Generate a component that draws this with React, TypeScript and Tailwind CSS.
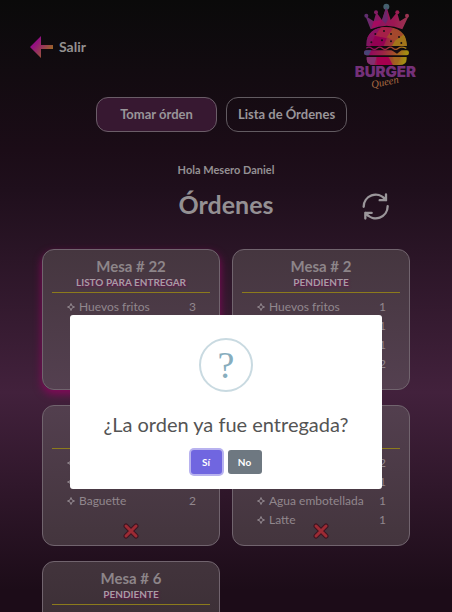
type Item = { name: string; count: number };
type Order = { table: number; status: string; items: Item[]; ready?: boolean };

const orders: Order[] = [
  { table: 22, status: "LISTO PARA ENTREGAR", ready: true, items: [{ name: "Huevos fritos", count: 3 }] },
  {
    table: 2,
    status: "PENDIENTE",
    items: [
      { name: "Huevos fritos", count: 1 },
      { name: "Baguette", count: 1 },
      { name: "Latte", count: 1 },
      { name: "Jugo", count: 2 },
    ],
  },
  {
    table: 4,
    status: "PENDIENTE",
    items: [
      { name: "Latte", count: 1 },
      { name: "Café", count: 1 },
      { name: "Baguette", count: 2 },
    ],
  },
  {
    table: 5,
    status: "PENDIENTE",
    items: [
      { name: "Baguette", count: 2 },
      { name: "Jugo", count: 1 },
      { name: "Agua embotellada", count: 1 },
      { name: "Latte", count: 1 },
    ],
  },
  { table: 6, status: "PENDIENTE", items: [] },
];

function Logo() {
  return (
    <svg viewBox="42 0 192 270" className="h-[90px] w-16" role="img" aria-label="Burger Queen">
      <defs>
        <linearGradient id="poly" x1="75" y1="90" x2="208" y2="125" gradientUnits="userSpaceOnUse">
          <stop offset="0" stopColor="#6b2468" />
          <stop offset="0.25" stopColor="#930b5c" />
          <stop offset="0.5" stopColor="#9c2347" />
          <stop offset="0.75" stopColor="#a25028" />
          <stop offset="1" stopColor="#a38d12" />
        </linearGradient>
        <linearGradient id="crown" x1="75" y1="60" x2="208" y2="70" gradientUnits="userSpaceOnUse">
          <stop offset="0" stopColor="#5c3170" />
          <stop offset="0.3" stopColor="#8d1560" />
          <stop offset="0.65" stopColor="#9c1752" />
          <stop offset="1" stopColor="#9a3a50" />
        </linearGradient>
        <clipPath id="burger">
          <path d="M79 138C77 101 103 81 139 81s63 20 61 57z" />
          <path d="M80 171h120v6q0 18-22 18h-76q-22 0-22-18z" />
        </clipPath>
      </defs>
      <g fill="url(#crown)">
        <path d="M76 47L101 64 109 37 126 60 139 19 152 60 171 37 179 64 206 47 187 88Q140 66 92 88z" />
        <circle cx="79" cy="47" r="6" />
        <circle cx="108" cy="37" r="6" />
        <circle cx="172" cy="37" r="6" />
        <circle cx="201" cy="47" r="6" />
      </g>
      <circle cx="139" cy="20" r="9" fill="#45606e" />
      <path d="M139 22l-13 38 11 12 7-14z" fill="#6a286b" />
      <path d="M94 86l7-22 25-4-8 14z" fill="#a40b60" />
      <g clipPath="url(#burger)">
        <rect x="75" y="78" width="130" height="120" fill="url(#poly)" />
        <path d="M75 78h50l-20 30-30 10z" fill="#8b1261" />
        <path d="M125 78l35 12-20 25-35-7z" fill="#a62048" />
        <path d="M160 84l30 20-25 18-25-10z" fill="#a4482d" />
        <path d="M105 108l35 7-10 25H90z" fill="#930052" />
        <path d="M165 122l28-20 12 38h-50z" fill="#a3751b" />
        <path d="M80 170h30l-8 28H75z" fill="#83316f" />
        <path d="M110 170h35l15 28h-50z" fill="#a5004e" />
        <path d="M158 170h25l-15 28z" fill="#a06520" />
      </g>
      <g fill="#1a0f16">
        <circle cx="132" cy="93" r="3" /><circle cx="153" cy="102" r="3" /><circle cx="177" cy="111" r="3" />
        <circle cx="106" cy="102" r="3" /><circle cx="126" cy="121" r="3" /><circle cx="153" cy="124" r="3" />
        <circle cx="94" cy="127" r="3" /><circle cx="184" cy="129" r="3" />
      </g>
      <path d="M79 145q8-7 16 0t16 0 16 0 16 0 16 0 16 0 24 0" fill="none" stroke="url(#poly)" strokeWidth="4" />
      <rect x="72" y="151" width="135" height="15" rx="7" fill="url(#poly)" />
      <path d="M72 159q0-8 8-8h14l-8 15q-14 0-14-7z" fill="#474577" />
      <path d="M154 150h31l-14 11z" fill="#160c13" />
      <text x="44" y="230" fill="#743078" className="font-['Inter'] text-[45px] font-black">BURGER</text>
      <text x="96" y="265" transform="rotate(-12 96 265)" fill="#a86a43" className="font-['Liberation_Serif'] text-[32px] italic">Queen</text>
    </svg>
  );
}

function Cross() {
  return (
    <svg viewBox="0 0 16 16" className="size-4" aria-hidden="true">
      <path d="M3 3l10 10M13 3L3 13" stroke="#3c1420" strokeWidth="5" strokeLinecap="round" />
      <path d="M3 3l10 10M13 3L3 13" stroke="#9c2b34" strokeWidth="3" strokeLinecap="round" />
    </svg>
  );
}

function Sparkle() {
  return (
    <svg viewBox="0 0 16 16" className="size-2" fill="none" stroke="currentColor" strokeWidth="2" aria-hidden="true">
      <path d="M8 1L10 6 15 8 10 10 8 15 6 10 1 8 6 6z" />
    </svg>
  );
}

function OrderCard({ order }: { order: Order }) {
  const glow = order.ready ? "shadow-[0_4px_8px_0px_#85085a]" : "";
  return (
    <article className={`relative flex min-h-[141px] flex-col rounded-xl border border-[#71646e] bg-[linear-gradient(#40333a_0px,#45363f_250px,#544050_392px,#45363f_530px,#3d3037_612px)] bg-fixed px-[9px] pt-2 ${glow}`}>
      <h2 className="text-center text-[15px] leading-4 font-bold text-[#8d8589]">Mesa # {order.table}</h2>
      <p className="pt-0.5 text-center text-[10px] leading-3 font-bold text-[#a69ca3] [text-shadow:1px_1px_2px_#6c1250]">{order.status}</p>
      <hr className="mt-1 border-[#8c7b1c]" />
      <ul className="pt-1 pr-3.5 pl-[15px] text-xs leading-[19px] text-[#91878d]">
        {order.items.map((item) => (
          <li key={item.name} className="flex justify-between">
            <span className="flex items-center gap-1">
              <Sparkle />
              {item.name}
            </span>
            <span>{item.count}</span>
          </li>
        ))}
      </ul>
      {!order.ready && order.table !== 2 && (
        <button type="button" aria-label="Cancelar orden" className="absolute bottom-1.5 left-1/2 -translate-x-1/2">
          <Cross />
        </button>
      )}
    </article>
  );
}

export default function App() {
  return (
    <div className="relative h-screen overflow-hidden bg-[linear-gradient(#0a0a0a_0px,#1b0c17_150px,#1f0f1c_190px,#42213c_392px,#1c0c18_590px)] font-['Lato',sans-serif]">
      <header className="flex items-start justify-between pr-[34px] pl-[29px]">
        <button type="button" className="mt-[35px] flex items-center gap-[6px] text-sm leading-6 font-bold text-[#949191]">
          <svg viewBox="0 0 24 24" className="size-6" aria-hidden="true">
            <defs>
              <linearGradient id="back" x1="3" y1="5" x2="21" y2="19" gradientUnits="userSpaceOnUse">
                <stop offset="0.2" stopColor="#930f83" />
                <stop offset="1" stopColor="#9c6c20" />
              </linearGradient>
            </defs>
            <path d="M1 12L12 1v9h12v4H12v9z" fill="url(#back)" />
          </svg>
          Salir
        </button>
        <Logo />
      </header>

      <nav className="flex justify-center pt-[7px] text-[13px] font-bold text-[#999599]">
        <button type="button" className="mr-[9px] h-[35px] w-[121px] rounded-xl border border-[#6b5d68] bg-[#371831]">Tomar órden</button>
        <button type="button" className="mr-[9px] h-[35px] w-[121px] rounded-xl border border-[#625b61]">Lista de Órdenes</button>
      </nav>

      <main>
        <p className="pt-[30px] text-center text-[11px] leading-4 font-bold text-[#949093]">Hola Mesero Daniel</p>
        <div className="grid grid-cols-[1fr_auto_1fr] items-center pt-2">
          <h1 className="col-start-2 text-[25px] leading-9 font-bold text-[#949093]">Órdenes</h1>
          <button type="button" aria-label="Actualizar" className="mr-[63px] justify-self-end pt-1">
            <svg viewBox="409 131 81 80" className="size-[27px]" fill="none" stroke="#9a969a" strokeWidth="7" strokeLinecap="round" strokeLinejoin="round" aria-hidden="true">
              <path d="M414 172A36 36 0 0 1 478 149M481 135v17h-19M472 143l9 9" />
              <path d="M486 170A36 36 0 0 1 422 193M419 207v-17h19M428 199l-9-9" />
            </svg>
          </button>
        </div>
        <section className="grid grid-cols-2 gap-x-3 gap-y-[15px] px-[42px] pt-[27px]">
          {orders.map((order) => (
            <OrderCard key={order.table} order={order} />
          ))}
        </section>
      </main>

      <div className="absolute inset-0 flex items-start justify-center px-[70px] pt-[315px]">
        <div role="dialog" aria-modal="true" aria-labelledby="question" className="flex w-full flex-col items-center rounded-[3px] bg-white pt-[23px] pb-[15px]">
          <div className="flex size-[54px] items-center justify-center rounded-full border-2 border-[#c9dae1] font-['Liberation_Serif',serif] text-[38px] leading-none text-[#87adbd]">?</div>
          <h2 id="question" className="pt-5 text-xl leading-6 text-[#545454]">¿La orden ya fue entregada?</h2>
          <div className="flex gap-[6px] pt-[14px] text-[10px] font-bold text-white">
            <button type="button" className="h-6 w-[31px] rounded-[3px] bg-[#7066e0] ring-2 ring-[#b8b2ef]">Sí</button>
            <button type="button" className="h-6 w-[34px] rounded-[3px] bg-[#6e7881]">No</button>
          </div>
        </div>
      </div>
    </div>
  );
}
